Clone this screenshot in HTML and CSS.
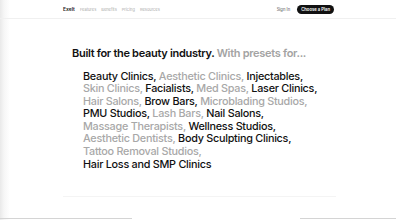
FILE: index.html
```html
<!DOCTYPE html>
<html>
<head>
<meta charset="utf-8">
<link rel="stylesheet" href="styles.css">
</head>
<body>
<div class="page">
  <header class="topbar">
    <div class="left">
      <span class="logo">Exelt</span>
      <span class="nav">Features</span>
      <span class="nav">Benefits</span>
      <span class="nav">Pricing</span>
      <span class="nav">Resources</span>
    </div>
    <div class="right">
      <span class="signin">Sign In</span>
      <span class="cta">Choose a Plan</span>
    </div>
  </header>
  <main class="content">
    <h1 class="title">Built for the beauty industry. <span class="muted">With presets for...</span></h1>
    <p class="list"><span class="dark">Beauty Clinics,</span> <span class="muted">Aesthetic Clinics,</span> <span class="dark">Injectables,</span><br>
<span class="muted">Skin Clinics,</span> <span class="dark">Facialists,</span> <span class="muted">Med Spas,</span> <span class="dark">Laser Clinics,</span><br>
<span class="muted">Hair Salons,</span> <span class="dark">Brow Bars,</span> <span class="muted">Microblading Studios,</span><br>
<span class="dark">PMU Studios,</span> <span class="muted">Lash Bars,</span> <span class="dark">Nail Salons,</span><br>
<span class="muted">Massage Therapists,</span> <span class="dark">Wellness Studios,</span><br>
<span class="muted">Aesthetic Dentists,</span> <span class="dark">Body Sculpting Clinics,</span><br>
<span class="muted">Tattoo Removal Studios,</span><br>
<span class="dark">Hair Loss and SMP Clinics</span></p>
  </main>
  <div class="rule"></div>
  <div class="bottom">
    <div class="bl"></div>
    <div class="br"></div>
  </div>
</div>
</body>
</html>
```
FILE: styles.css
```css
html, body {
  margin: 0;
  padding: 0;
  background: #fff;
}
body {
  width: 396px;
  height: 220px;
  overflow: hidden;
  font-family: Inter, "Liberation Sans", sans-serif;
  color: #111;
}
.page {
  position: relative;
  height: 220px;
  background: linear-gradient(to right, #e9e9e9 0px, #f6f6f6 4px, #fff 10px);
}
.topbar {
  height: 18px;
  border-bottom: 1px solid #f0f0f0;
  display: flex;
  align-items: center;
  justify-content: space-between;
  padding: 0 62px 0 63px;
}
.left {
  display: flex;
  align-items: center;
  gap: 5px;
}
.logo {
  font-size: 5px;
  font-weight: 600;
  color: #222;
}
.nav {
  font-size: 4px;
  color: #aaa;
}
.right {
  display: flex;
  align-items: center;
  gap: 7px;
}
.signin {
  font-size: 4.2px;
  color: #555;
}
.cta {
  background: #111;
  color: #fff;
  font-size: 4.2px;
  font-weight: 600;
  padding: 2px 4px;
  border-radius: 5px;
}
.content {
  padding: 28px 0 0 72px;
}
.title {
  margin: 0;
  font-size: 11px;
  font-weight: 600;
  letter-spacing: -0.3px;
  line-height: 13px;
  color: #111;
}
.muted {
  color: #a3a3a3;
}
.list {
  margin: 10.5px 0 0 11px;
  font-size: 10.8px;
  font-weight: 500;
  line-height: 12.6px;
  letter-spacing: -0.25px;
}
.dark {
  color: #111;
}
.list .muted {
  color: #a8a8a8;
}
.rule {
  position: absolute;
  left: 63px;
  right: 60px;
  top: 196px;
  height: 1px;
  background: #f4f4f4;
}
.bottom {
  position: absolute;
  left: 0;
  right: 0;
  bottom: 1px;
  height: 1px;
  display: flex;
  justify-content: space-between;
}
.bl {
  width: 132px;
  background: #d4d4d4;
}
.br {
  width: 96px;
  background: #d4d4d4;
}
```
